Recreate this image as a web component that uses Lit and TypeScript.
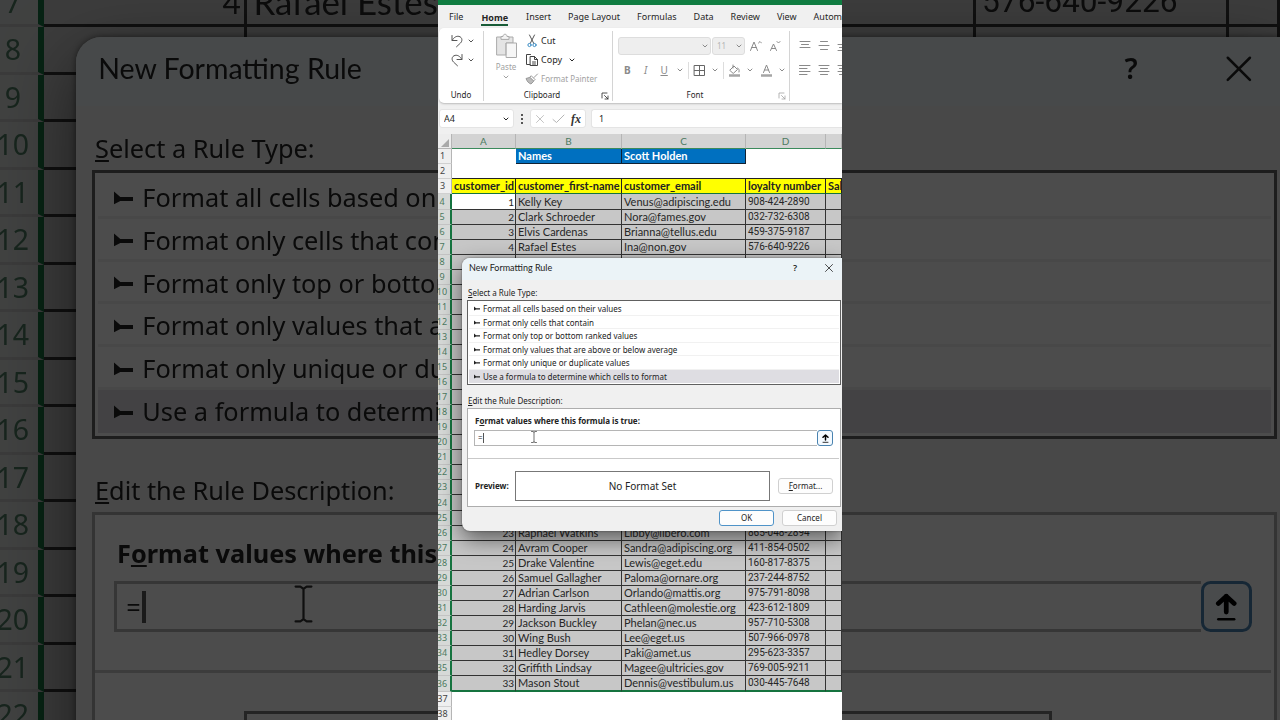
import { LitElement, html, svg, css, nothing } from "lit";
import { customElement } from "lit/decorators.js";
import { classMap } from "lit/directives/class-map.js";

type Row = { n: number; id?: number; name?: string; email?: string; loyalty?: string };

const people: Row[] = [
  { n: 4, id: 1, name: "Kelly Key", email: "Venus@adipiscing.edu", loyalty: "908-424-2890" },
  { n: 5, id: 2, name: "Clark Schroeder", email: "Nora@fames.gov", loyalty: "032-732-6308" },
  { n: 6, id: 3, name: "Elvis Cardenas", email: "Brianna@tellus.edu", loyalty: "459-375-9187" },
  { n: 7, id: 4, name: "Rafael Estes", email: "Ina@non.gov", loyalty: "576-640-9226" },
  ...Array.from({ length: 18 }, (_, i) => ({ n: i + 8 })),
  { n: 26, id: 23, name: "Raphael Watkins", email: "Libby@libero.com", loyalty: "865-048-2894" },
  { n: 27, id: 24, name: "Avram Cooper", email: "Sandra@adipiscing.org", loyalty: "411-854-0502" },
  { n: 28, id: 25, name: "Drake Valentine", email: "Lewis@eget.edu", loyalty: "160-817-8375" },
  { n: 29, id: 26, name: "Samuel Gallagher", email: "Paloma@ornare.org", loyalty: "237-244-8752" },
  { n: 30, id: 27, name: "Adrian Carlson", email: "Orlando@mattis.org", loyalty: "975-791-8098" },
  { n: 31, id: 28, name: "Harding Jarvis", email: "Cathleen@molestie.org", loyalty: "423-612-1809" },
  { n: 32, id: 29, name: "Jackson Buckley", email: "Phelan@nec.us", loyalty: "957-710-5308" },
  { n: 33, id: 30, name: "Wing Bush", email: "Lee@eget.us", loyalty: "507-966-0978" },
  { n: 34, id: 31, name: "Hedley Dorsey", email: "Paki@amet.us", loyalty: "295-623-3357" },
  { n: 35, id: 32, name: "Griffith Lindsay", email: "Magee@ultricies.gov", loyalty: "769-005-9211" },
  { n: 36, id: 33, name: "Mason Stout", email: "Dennis@vestibulum.us", loyalty: "030-445-7648" },
];

const tabs = ["File", "Home", "Insert", "Page Layout", "Formulas", "Data", "Review", "View", "Automate"];

const ruleTypes = [
  "Format all cells based on their values",
  "Format only cells that contain",
  "Format only top or bottom ranked values",
  "Format only values that are above or below average",
  "Format only unique or duplicate values",
  "Use a formula to determine which cells to format",
];

const icon = (w: number, h: number, body: unknown) =>
  html`<svg width=${w} height=${h} viewBox="0 0 ${w} ${h}" fill="none" stroke="currentColor" stroke-linecap="round" stroke-linejoin="round" aria-hidden="true">${body}</svg>`;

const chevron = icon(6, 4, svg`<path d="M1 1L3 3L5 1"/>`);
const undo = icon(14, 14, svg`<path d="M2 1.5V6.5H7M2.2 6.3C4 3.2 6.5 1.8 9 2.4C12.5 3.3 12.6 7 10.5 9L6.5 12.8"/>`);
const redo = icon(14, 14, svg`<path d="M12 1.5V6.5H7M11.8 6.3C10 3.2 7.5 1.8 5 2.4C1.5 3.3 1.4 7 3.5 9L7.5 12.8"/>`);
const paste = icon(24, 26, svg`
  <path d="M3 4H19V10H12V22H3Z" fill="#e4e4e4" stroke="#aaa"/>
  <path d="M7 6V3.5H9C9 .5 13 .5 13 3.5H15V6Z" fill="#f4f4f4" stroke="#aaa"/>
  <path d="M12.5 10H22.5V24.5H12.5Z" fill="#f6f6f6" stroke="#aaa"/>`);
const cut = icon(10, 14, svg`<path d="M2.5 1L6.8 9.5M7.5 1L3.2 9.5" stroke="#555"/><circle cx="2.5" cy="11" r="1.6" stroke="#3a8cc4"/><circle cx="7.5" cy="11" r="1.6" stroke="#3a8cc4"/>`);
const copy = icon(14, 14, svg`<path d="M5 11.5H1.5V1.5H5.5" stroke="#444"/><path d="M5.5 3.5H9.5L12.5 6.5V12.5H5.5ZM9.5 3.5V6.5H12.5M7.5 9H10.5M7.5 11H10.5" stroke="#444"/>`);
const painter = icon(14, 12, svg`<path d="M12.5 1L9 4.5M6.5 3L10 6.5L8.5 8L5 4.5Z" stroke="#999"/><path d="M4.5 4.5L1 5.5C2 8.5 4 10.5 6 11L8.5 8.5Z" fill="#bbb" stroke="#999"/>`);
const launcher = icon(8, 8, svg`<path d="M1 6V1H6M3.5 3.5L7 7M7 4V7H4" stroke-width=".8"/>`);
const borders = icon(13, 13, svg`<path d="M1.5 1.5H11.5V11.5H1.5ZM6.5 1.5V11.5M1.5 6.5H11.5" stroke="#666"/>`);
const bucket = icon(13, 13, svg`<path d="M2 6L6 2L9.5 5.5L5.5 9.2ZM5 1V4M9.5 4C11 4.5 11.5 6 11 8"/><path d="M1 11.5H12" stroke="#a5a5a5" stroke-width="2.5" stroke-linecap="butt"/>`);
const fontColor = icon(13, 13, svg`<path d="M3.5 8.5L6.5 1L9.5 8.5M4.5 6H8.5"/><path d="M1 11.5H12" stroke="#a5a5a5" stroke-width="2.5" stroke-linecap="butt"/>`);
const grow = icon(13, 12, svg`<path d="M1.5 10.5L5 2L8.500 10.5M2.7 7.5H7.3M9.5 3L11 1.5L12.5 3"/>`);
const shrink = icon(13, 12, svg`<path d="M2.5 10.5L5.5 4L8.5 10.5M3.5 8.5H7.5M9 1.5L10.5 3L12 1.5"/>`);
const lines = (...w: number[]) =>
  icon(12, 12, svg`${w.map((x, i) => svg`<path d="M${6 - x / 2} ${i * 3 + 1.5}h${x}"/>`)}`);
const spaced = (...w: number[]) =>
  icon(12, 12, svg`${w.map((x, i) => svg`<path d="M${6 - x / 2} ${i * 4 + 1.5}h${x}"/>`)}`);
const leftLines = icon(12, 12, svg`<path d="M.5 1.5H11M.5 4.5H8M.5 7.5H11M.5 10.5H8"/>`);
const cross = icon(10, 10, svg`<path d="M1.5 1.5L8.5 8.5M8.5 1.5L1.5 8.5" stroke-width=".8"/>`);
const check = icon(13, 10, svg`<path d="M1 5.5L4.5 8.5L12 1"/>`);
const pointer = icon(6, 5, svg`<path d="M0 .5V4.5L2 3.5H6V2.2H2Z" fill="currentColor" stroke="none"/>`);
const upArrow = icon(9, 9, svg`<path d="M4.5 6V1M2 3.3L4.5 1L7 3.3" stroke-width="1.5"/><path d="M2 8.3H7" stroke-width=".8"/>`);
const ibeam = icon(6, 12, svg`<path d="M.5 .5H2L3 1.2L4 .5H5.5M3 1.2V10.8M.5 11.5H2L3 10.8L4 11.5H5.5" stroke-width=".7"/>`);

@customElement("rule-dialog")
class RuleDialog extends LitElement {
  static styles = css`
    :host { display: block; box-sizing: border-box; background: #f0f0f0; border-radius: 8px 0 0 8px; overflow: hidden;
      color: #222; font: 8px/12px "Noto Sans", "Open Sans", sans-serif; }
    * { box-sizing: border-box; }
    button, input { font: inherit; color: inherit; padding: 0; margin: 0; }
    svg { display: block; }
    .title { display: flex; align-items: center; height: 22px; padding: 0 8px 2px 7px; background: #ebf3f7; }
    .title h2 { flex: 1; margin: 0; font: 9px/12px Lato, sans-serif; }
    .title button { display: grid; place-items: center; width: 10px; height: 16px; border: 0; background: none; }
    .title .help { margin-right: 24px; font-size: 9px; font-weight: 600; }
    .content { padding: 7px 1px 6px 5px; }
    .label { display: block; margin: 0 1px; height: 13px; }
    .types { display: grid; grid-template-rows: repeat(6, minmax(0, 1fr)); height: 85px; margin: 0; padding: 1px; list-style: none;
      line-height: 11px; background: #fff; border: 1px solid #606060; }
    .types li { display: flex; align-items: center; gap: 3px; padding: 1px 0 0 5px; border-bottom: 1px solid #f1f1f1; }
    .types .chosen { background: #dedde2; border-color: #dedde2; }
    .second { margin-top: 10px; }
    .edit { border: 1px solid #adadad; background: #fff; height: 99px; }
    .formula { padding: 6px 6px 0 6px; height: 50px; border-bottom: 1px solid #c9c9c9; margin-right: 1px; }
    .formula label { display: block; font-weight: 700; padding-left: 1px; }
    .field { display: flex; height: 16px; margin-top: 3px; position: relative; }
    .field input { flex: 1; min-width: 0; padding-left: 3px; border: 1px solid #b5b5b5; border-right: 0; background: #fff; outline: 0; }
    .field button { display: grid; place-items: center; width: 16px; border: 1px solid #4a83b0; border-radius: 3px; background: #f4faff; color: #000; }
    .caret { position: absolute; left: 9px; top: 3px; width: 1px; height: 10px; background: #555; }
    .beam { position: absolute; left: 57px; top: 1px; color: #333; }
    .preview { display: flex; align-items: center; height: 54px; padding: 0 7px; gap: 8px; }
    .preview b { width: 32px; }
    .sample { flex: 1; display: grid; place-items: center; height: 30px; border: 1px solid #777; font-size: 10px; }
    .btn { width: 55px; height: 16px; border: 1px solid #d0d0d0; border-radius: 3px; background: #fdfdfd; line-height: 12px; }
    .ok { border: 1px solid #4f93c8; }
    .foot { display: flex; justify-content: flex-end; gap: 8px; padding: 3px 4px 0 0; }
  `;
  render() {
    return html`
      <header class="title">
        <h2>New Formatting Rule</h2>
        <button class="help" aria-label="Help">?</button>
        <button aria-label="Close">${cross}</button>
      </header>
      <div class="content">
        <span class="label"><u>S</u>elect a Rule Type:</span>
        <ul class="types">
          ${ruleTypes.map((t, i) => html`<li class=${classMap({ chosen: i === 5 })}>${pointer}<span>${t}</span></li>`)}
        </ul>
        <span class="label second"><u>E</u>dit the Rule Description:</span>
        <section class="edit">
          <div class="formula">
            <label for="formula">F<u>o</u>rmat values where this formula is true:</label>
            <div class="field">
              <input id="formula" type="text" value="=" /><button aria-label="Collapse dialog">${upArrow}</button>
              <span class="caret"></span><span class="beam">${ibeam}</span>
            </div>
          </div>
          <div class="preview">
            <b>Preview:</b><div class="sample">No Format Set</div><button class="btn"><u>F</u>ormat...</button>
          </div>
        </section>
        <footer class="foot"><button class="btn ok">OK</button><button class="btn">Cancel</button></footer>
      </div>`;
  }
}

@customElement("sheet-window")
class SheetWindow extends LitElement {
  static styles = css`
    :host { display: block; position: relative; overflow: hidden; background: #f0f0f0; color: #262626;
      font: 8px/12px "Noto Sans", "Open Sans", sans-serif; }
    * { box-sizing: border-box; }
    button, input, select { font: inherit; color: inherit; padding: 0; margin: 0; border: 0; background: none; }
    svg { display: block; }
    .band { height: 5px; background: #107c41; }
    .tabs { display: flex; gap: 17px; height: 23px; padding: 5px 0 0 11px; font-size: 9px; line-height: 13px; white-space: nowrap; overflow: hidden; }
    .tabs button { flex: none; height: 15px; border-bottom: 2px solid transparent; }
    .tabs .on { font-weight: 700; border-color: #185c37; height: 16px; margin: 0 1px; }
    .ribbon { display: flex; height: 75px; margin-left: 1px; padding: 3px 0 0; background: #fff; overflow: hidden;
      border-radius: 5px 0 0 5px; box-shadow: 0 1px 2px #bbb; }
    .group { flex: none; display: flex; flex-direction: column; height: 70px; border-right: 1px solid #d4d4d4; }
    .body { flex: 1; }
    .name { position: relative; height: 12px; text-align: center; }
    .clip .name, .font .name { padding-right: 12px; }
    .name button { position: absolute; right: 3px; top: 3px; }
    .dim { color: #a2a2a2; }
    .undo { width: 45px; }
    .undo .body div { display: grid; grid-template-columns: 14px 6px; align-items: center; gap: 4px; height: 19px; padding-left: 11px; color: #555; }
    .clip { width: 129px; }
    .clip .body { display: flex; gap: 7px; padding-left: 10px; }
    .paste { display: flex; flex-direction: column; align-items: center; gap: 2px; width: 24px; padding-top: 2px; color: #a2a2a2; }
    .cmds { display: flex; flex-direction: column; }
    .cmds button { display: grid; grid-template-columns: 14px auto 6px; justify-content: start; align-items: center; gap: 2px; height: 19px; white-space: nowrap; font-size: 9px; }
    .cmds button.dim { font-size: 8px; }
    .cmds svg { justify-self: center; }
    .cmds .more { margin-left: 8px; }
    .font { width: 177px; }
    .font .body { display: flex; flex-direction: column; gap: 4px; padding: 5px 0 0 5px; color: #8a8a8a; }
    .line { display: flex; align-items: center; height: 20px; }
    .pick { position: relative; height: 18px; }
    .pick select { appearance: none; width: 100%; height: 18px; padding: 0 4px; border: 1px solid #ddd; border-radius: 3px; background: #eee; color: #b5b5b5; opacity: 1; }
    .pick svg { position: absolute; right: 3px; top: 7px; }
    .face { width: 93px; }
    .size { width: 33px; margin: 0 1px; }
    .line button { display: grid; place-items: center; width: 19px; height: 18px; font-size: 10px; }
    .line .mini { width: 14px; }
    .line hr { width: 1px; height: 17px; margin: 0 1px; border: 0; background: #ddd; }
    .align { border: 0; }
    .align .body { display: flex; flex-direction: column; gap: 4px; padding: 5px 0 0 5px; color: #8a8a8a; }
    .bar { display: flex; gap: 5px; height: 31px; padding: 6px 0 0 1px; }
    .box { display: flex; align-items: center; height: 19px; background: #fff; border: 1px solid #e4e4e4; border-radius: 3px; }
    .ref { width: 75px; padding: 0 4px; }
    .ref input { flex: 1; min-width: 0; font-size: 9px; }
    .dots { width: 6px; display: flex; flex-direction: column; justify-content: center; align-items: center; gap: 2px; height: 19px; }
    .dots i { width: 2px; height: 2px; background: #555; }
    .entry { width: 56px; justify-content: space-between; padding: 0 4px; color: #b5b5b5; }
    .fx { font: italic 700 12px/16px "Liberation Serif", serif; color: #333; }
    .value { flex: 1; min-width: 0; border-right: 0; border-radius: 3px 0 0 3px; }
    .value input { width: 100%; padding-left: 7px; font-size: 9px; }
    table { width: 100%; table-layout: fixed; border-collapse: separate; border-spacing: 0; background: #fff; font: 11px/14px Lato, "Open Sans", sans-serif; }
    tr { height: 15px; }
    tbody tr:nth-child(20n + 4) { height: 16px; }
    th, td { padding: 0; overflow: hidden; white-space: nowrap; text-align: left; line-height: 14px; }
    .c0 { width: 14px; } .c1 { width: 64px; } .c2 { width: 106px; } .c3 { width: 124px; } .c4 { width: 80px; }
    thead th { height: 14px; line-height: 13px; background: #d3d3d3; border-right: 1px solid #b5b5b5; border-bottom: 1px solid #3c8a5c;
      text-align: center; font-weight: 400; font-size: 10px; color: #4c7a60; }
    thead .corner { background: #ededed; border-bottom-color: #b5b5b5; }
    .corner svg { margin: 3px 2px 0 3px; }
    tbody th { padding-right: 4px; font: 9px/14px "Noto Sans", sans-serif; background: #efefef; color: #444;
      border-right: 1px solid #b5b5b5; border-bottom: 1px solid #d0d0d0; }
    tbody th span { display: flex; justify-content: center; }
    tbody .sel th { background: #d6d9d7; color: #4c7a60; border-right: 2px solid #15733f; border-bottom-color: #c3c3c3; }
    td { padding-left: 2px; }
    .above td { border-bottom: 1px solid #222; }
    .names .blue { background: #0070c0; color: #fff; font-weight: 700; border-right: 1px solid #123; border-bottom: 1px solid #123; }
    .heads td { background: #ff0; color: #222; font-weight: 700; border-right: 1px solid #222; border-bottom: 1px solid #15733f; }
    .sel td { background: #c7c7c7; color: #262626; border-right: 1px solid #333; border-bottom: 1px solid #333; }
    .sel .id { text-align: right; padding-right: 1px; font-size: 10px; }
    .sel .phone { font-family: Roboto, sans-serif; font-size: 10px; }
    .first .id { background: #fff; }
    .last td { border-bottom: 2px solid #15733f; }
    rule-dialog { position: absolute; left: 24px; right: 0; top: 258px; height: 273px; box-shadow: 0 8px 22px rgba(0, 0, 0, .55), 0 0 2px rgba(0, 0, 0, .5); }
  `;

  private row(r: Row) {
    return html`<tr class=${classMap({ sel: true, first: r.n === 4, last: r.n === 36 })}>
      <th scope="row"><span>${r.n}</span></th><td class="id">${r.id ?? nothing}</td><td>${r.name ?? nothing}</td>
      <td>${r.email ?? nothing}</td><td class="phone">${r.loyalty ?? nothing}</td><td></td></tr>`;
  }

  render() {
    const more = html`<button class="mini" aria-label="More">${chevron}</button>`;
    return html`
      <div class="band"></div>
      <nav class="tabs">${tabs.map((t) => html`<button class=${classMap({ on: t === "Home" })}>${t}</button>`)}</nav>
      <div class="ribbon">
        <section class="group undo">
          <div class="body">
            <div><button aria-label="Undo">${undo}</button><button aria-label="Undo history">${chevron}</button></div>
            <div><button aria-label="Redo">${redo}</button><button aria-label="Redo history">${chevron}</button></div>
          </div>
          <div class="name">Undo</div>
        </section>
        <section class="group clip">
          <div class="body">
            <button class="paste">${paste}<span>Paste</span>${chevron}</button>
            <div class="cmds">
              <button>${cut}<span>Cut</span></button>
              <button>${copy}<span>Copy</span><span class="more">${chevron}</span></button>
              <button class="dim">${painter}<span>Format Painter</span></button>
            </div>
          </div>
          <div class="name">Clipboard<button aria-label="Clipboard options">${launcher}</button></div>
        </section>
        <section class="group font">
          <div class="body">
            <div class="line">
              <div class="pick face"><select aria-label="Font"><option></option></select>${chevron}</div>
              <div class="pick size"><select aria-label="Font size"><option>11</option></select>${chevron}</div>
              <button aria-label="Increase font size">${grow}</button><button aria-label="Decrease font size">${shrink}</button>
            </div>
            <div class="line">
              <button aria-label="Bold"><b>B</b></button><button aria-label="Italic"><i>I</i></button>
              <button aria-label="Underline"><u>U</u></button>${more}<hr /><button aria-label="Borders">${borders}</button>${more}<hr />
              <button aria-label="Fill color">${bucket}</button>${more}<button aria-label="Font color">${fontColor}</button>${more}
            </div>
          </div>
          <div class="name">Font<button class="dim" aria-label="Font options">${launcher}</button></div>
        </section>
        <section class="group align">
          <div class="body">
            <div class="line"><button aria-label="Top align">${lines(10, 7, 10)}</button><button aria-label="Middle align">${spaced(7, 10, 7)}</button><button aria-label="Bottom align">${lines(0, 10, 7, 10)}</button></div>
            <div class="line"><button aria-label="Align left">${leftLines}</button><button aria-label="Center">${lines(10, 7, 10, 7)}</button><button aria-label="Align right">${lines(10, 7, 10, 7)}</button></div>
          </div>
        </section>
      </div>
      <div class="bar">
        <div class="box ref"><input aria-label="Name box" value="A4" /><button aria-label="Names">${chevron}</button></div>
        <div class="dots"><i></i><i></i><i></i></div>
        <div class="box entry"><button aria-label="Cancel entry">${cross}</button><button aria-label="Accept entry">${check}</button><button class="fx" aria-label="Insert function">fx</button></div>
        <div class="box value"><input aria-label="Formula bar" value="1" /></div>
      </div>
      <table>
        <colgroup><col class="c0" /><col class="c1" /><col class="c2" /><col class="c3" /><col class="c4" /><col /></colgroup>
        <thead><tr>
          <th class="corner">${icon(8, 8, svg`<path d="M8 0V8H0Z" fill="#aaa" stroke="none"/>`)}</th>
          <th>A</th><th>B</th><th>C</th><th>D</th><th></th>
        </tr></thead>
        <tbody>
          <tr class="names"><th><span>1</span></th><td></td><td class="blue">Names</td><td class="blue">Scott Holden</td><td></td><td></td></tr>
          <tr class="above"><th><span>2</span></th><td></td><td></td><td></td><td></td><td></td></tr>
          <tr class="heads"><th><span>3</span></th><td>customer_id</td><td>customer_first-name</td><td>customer_email</td><td>loyalty number</td><td>Sales</td></tr>
          ${people.map((r) => this.row(r))}
          <tr><th><span>37</span></th><td></td><td></td><td></td><td></td><td></td></tr>
          <tr><th><span>38</span></th><td></td><td></td><td></td><td></td><td></td></tr>
        </tbody>
      </table>
      <rule-dialog></rule-dialog>`;
  }
}

@customElement("app-root")
class AppRoot extends LitElement {
  static styles = css`
    :host { display: grid; grid-template: 100vh / 100%; place-items: center; overflow: hidden; background: #333; }
    .backdrop, .front { grid-area: 1 / 1; aspect-ratio: 101 / 180; min-width: 0; min-height: 0; }
    .backdrop { width: 100%; filter: brightness(.3); }
    .backdrop sheet-window { zoom: 3.168; height: 100%; }
    .front { height: 100vh; z-index: 1; }
    .front sheet-window { height: 100%; }
  `;
  render() {
    return html`
      <div class="backdrop" aria-hidden="true" inert><sheet-window></sheet-window></div>
      <main class="front"><sheet-window></sheet-window></main>`;
  }
}
